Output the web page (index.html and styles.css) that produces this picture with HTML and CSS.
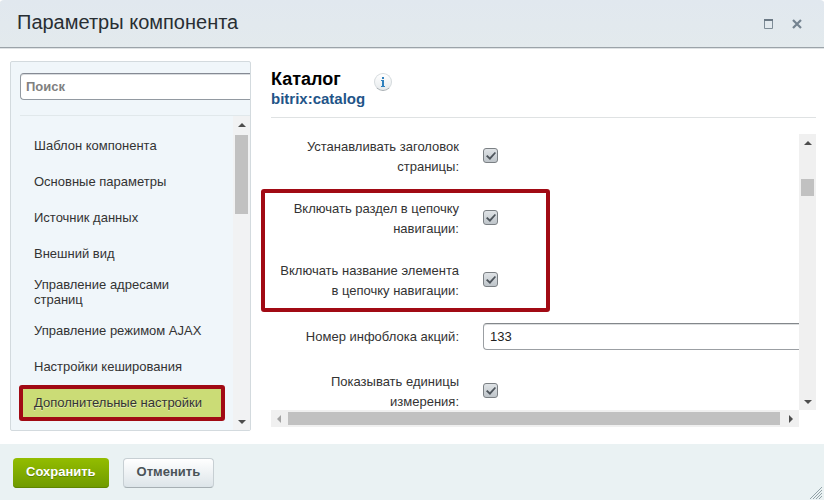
FILE: index.html
```html
<!DOCTYPE html>
<html lang="ru">
<head>
<meta charset="utf-8">
<title>Параметры компонента</title>
<link rel="stylesheet" href="styles.css">
</head>
<body>
<div class="dialog">
  <header class="dialog-head">
    <h1>Параметры компонента</h1>
    <button class="win-btn" type="button" aria-label="Развернуть"><svg width="10" height="10" viewBox="0 0 10 10"><path d="M1 1.500H9M.5 1V9.500H8.500V1" fill="none" stroke="#7e8c97"/><path d="M0 1H9" stroke="#6b7985" stroke-width="2"/></svg></button>
    <button class="win-btn" type="button" aria-label="Закрыть"><svg width="10" height="10" viewBox="0 0 10 10"><path d="M1 1L9 9M9 1L1 9" stroke="#748390" stroke-width="2.200"/></svg></button>
  </header>

  <div class="dialog-body">
    <aside class="side">
      <input class="search" type="text" placeholder="Поиск" aria-label="Поиск">
      <div class="side-scroll">
        <nav class="menu">
          <a href="#">Шаблон компонента</a>
          <a href="#">Основные параметры</a>
          <a href="#">Источник данных</a>
          <a href="#">Внешний вид</a>
          <a class="two-line" href="#">Управление адресами страниц</a>
          <a href="#">Управление режимом AJAX</a>
          <a href="#">Настройки кеширования</a>
          <a class="current" href="#">Дополнительные настройки</a>
        </nav>
        <div class="vbar side-bar">
          <svg width="8" height="4" viewBox="0 0 8 4"><path d="M0 4L4 0L8 4Z"/></svg>
          <span class="thumb side-thumb"></span>
          <svg class="end" width="8" height="4" viewBox="0 0 8 4"><path d="M0 0L4 4L8 0Z"/></svg>
        </div>
      </div>
    </aside>

    <main class="content">
      <div class="content-head">
        <div>
          <h2>Каталог</h2>
          <a class="code" href="#">bitrix:catalog</a>
        </div>
        <button class="info" type="button" aria-label="Справка"><svg width="6" height="10" viewBox="0 0 6 10"><path d="M2 0H4V2H2ZM1 3H4V9H5V10H1V9H2V4H1Z" fill="#2f80bd"/></svg></button>
      </div>
      <div class="pane">
        <form class="form">
          <div class="row"><label for="c1">Устанавливать заголовок страницы:</label><input id="c1" type="checkbox" checked></div>
          <div class="marked">
            <div class="row"><label for="c2">Включать раздел в цепочку навигации:</label><input id="c2" type="checkbox" checked></div>
            <div class="row"><label for="c3">Включать название элемента в цепочку навигации:</label><input id="c3" type="checkbox" checked></div>
          </div>
          <div class="row field"><label for="c4">Номер инфоблока акций:</label><input id="c4" type="text" value="133"></div>
          <div class="row"><label for="c5">Показывать единицы измерения:</label><input id="c5" type="checkbox" checked></div>
        </form>
        <div class="vbar">
          <svg width="8" height="4" viewBox="0 0 8 4"><path d="M0 4L4 0L8 4Z"/></svg>
          <span class="thumb form-thumb"></span>
          <svg class="end" width="8" height="4" viewBox="0 0 8 4"><path d="M0 0L4 4L8 0Z"/></svg>
        </div>
        <div class="hbar">
          <svg class="dim" width="4" height="8" viewBox="0 0 4 8"><path d="M4 0L0 4L4 8Z"/></svg>
          <span class="thumb"></span>
          <svg width="4" height="8" viewBox="0 0 4 8"><path d="M0 0L4 4L0 8Z"/></svg>
        </div>
      </div>
    </main>
  </div>

  <footer class="dialog-foot">
    <button class="btn save" type="button">Сохранить</button>
    <button class="btn cancel" type="button">Отменить</button>
    <svg class="grip" width="12" height="12" viewBox="0 0 12 12"><path d="M0 12L12 0M3 12L12 3M6 12L12 6M9 12L12 9" stroke="#93a3a8"/></svg>
  </footer>
</div>
</body>
</html>
```
FILE: styles.css
```css
*, *::before, *::after { box-sizing: border-box; }
body {
  margin: 0;
  background: #fff;
  color: #333;
  font-family: "Liberation Sans", Arial, sans-serif;
  font-size: 13px;
}
h1, h2 { margin: 0; }
a { text-decoration: none; color: inherit; }
svg { display: block; flex: none; }
button { font-family: inherit; cursor: pointer; }

.dialog {
  display: flex;
  flex-direction: column;
  min-height: 100vh;
}
.dialog-head {
  display: flex;
  align-items: center;
  gap: 18px;
  height: 49px;
  padding: 0 22px 0 17px;
  background: linear-gradient(#e1e8ef, #e3eaed);
  border-bottom: 1px solid #dfe3e5;
  box-shadow: inset 0 -1px #9ba3a9;
  border-radius: 4px 4px 0 0;
}
.dialog-head h1 {
  flex: 1;
  padding-bottom: 5px;
  font-size: 20px;
  font-weight: 400;
  line-height: 24px;
  color: #282e33;
}
.win-btn { padding: 0; border: 0; background: none; }

.dialog-body {
  flex: 1;
  display: flex;
  gap: 20px;
  padding: 12px 8px 13px 10px;
}

.side {
  flex: none;
  width: 241px;
  display: flex;
  flex-direction: column;
  padding: 11px 0 0 9px;
  background: #f0f6fa;
  border: 1px solid #d3dade;
  border-radius: 2px;
}
.search {
  height: 27px;
  padding: 0 5px;
  font: bold 13px "Liberation Sans", Arial, sans-serif;
  background: #fff;
  border: 1px solid #9299a1;
  border-top-color: #858a94;
  border-right: 0;
  border-radius: 4px 0 0 4px;
  box-shadow: inset 0 1px #d9dcdf;
}
.search::placeholder { color: #808080; opacity: 1; }
.side-scroll {
  flex: 1;
  display: flex;
  margin-top: 15px;
  border-top: 1px solid #e1e8eb;
}
.menu { flex: 1; padding-top: 12px; }
.menu a {
  display: flex;
  align-items: center;
  height: 36px;
  padding: 0 14px 2px;
  line-height: 15px;
}
.menu .two-line { height: 41px; }
.menu .current {
  margin-left: -1px;
  margin-right: 8px;
  padding: 0 11px 2px;
  background: #cbdc76;
  border: 4px solid #a10a14;
  border-radius: 3px;
  text-shadow: 0 1px #e4eeb2;
}

.vbar {
  display: flex;
  flex-direction: column;
  align-items: center;
  width: 17px;
  padding: 7px 0 6px;
  background: #f0f0f0;
}
.vbar .end { margin-top: auto; }
.vbar path, .hbar path { fill: #4d4d4d; }
.thumb { display: block; background: #c1c1c1; }
.side-bar { background: #f1f2f3; }
.side-thumb { width: 13px; height: 79px; margin-top: 8px; }

.content {
  flex: 1;
  min-width: 0;
  display: flex;
  flex-direction: column;
}
.content-head {
  display: flex;
  align-items: flex-start;
  gap: 9px;
  height: 57px;
  padding-top: 8px;
  border-bottom: 1px solid #dfe2e3;
}
.content-head h2 {
  font-size: 18px;
  line-height: 20px;
  color: #000;
}
.code {
  display: block;
  font-size: 15px;
  font-weight: 700;
  line-height: 20px;
  color: #1f5588;
}
.info {
  display: flex;
  align-items: center;
  justify-content: center;
  width: 18px;
  height: 18px;
  margin-top: 4px;
  padding: 0;
  border: 1px solid #d5dadd;
  border-bottom-color: #a8afb3;
  border-radius: 50%;
  background: linear-gradient(#fff, #e6eaec);
}

.pane {
  flex: 1;
  display: grid;
  grid-template-columns: 1fr 17px;
  grid-template-rows: 1fr 17px;
  margin-bottom: 4px;
}
.pane > .vbar { margin-top: 16px; }
.form { height: 284px; margin-top: 8px; }
.row {
  display: grid;
  grid-template-columns: 188px 1fr;
  column-gap: 24px;
  align-items: center;
  height: 62px;
}
.row label {
  padding-left: 8px;
  text-align: right;
  line-height: 20px;
}
.row.field { height: 49px; }
.marked { position: relative; }
.marked::after {
  content: "";
  position: absolute;
  top: 1px;
  left: -10px;
  width: 289px;
  height: 123px;
  border: 4px solid #a10a14;
  border-radius: 3px;
  pointer-events: none;
}
input[type="checkbox"] {
  appearance: none;
  width: 15px;
  height: 15px;
  margin: 0 0 3px;
  border: 1px solid #7b8084;
  border-radius: 3px;
  background: linear-gradient(#dfe3e6, #bfc5ca);
}
input[type="checkbox"]::before {
  content: "";
  display: block;
  width: 10px;
  height: 8px;
  margin: 3px 2px;
  background: #4e555c;
  clip-path: polygon(0 52%, 14% 36%, 38% 66%, 88% 0, 100% 12%, 40% 100%);
}
.field input {
  width: 100%;
  min-width: 0;
  height: 27px;
  padding: 0 6px;
  font: 13px "Liberation Sans", Arial, sans-serif;
  color: #222;
  background: #fff;
  border: 1px solid #9b9fa3;
  border-top-color: #83878b;
  border-right: 0;
  border-radius: 4px 0 0 4px;
  box-shadow: inset 0 1px #dcdedf;
}
.form-thumb { width: 13px; height: 17px; margin-top: 34px; }
.hbar {
  display: flex;
  align-items: center;
  gap: 9px;
  padding: 0 6px;
  background: #f0f0f0;
}
.hbar .thumb { flex: 1; height: 13px; margin-left: -2px; }
.hbar .dim path { fill: #a3a3a3; }

.dialog-foot {
  display: flex;
  gap: 14px;
  height: 56px;
  padding: 14px 2px 1px 13px;
  background: #eaf2f3;
}
.btn {
  height: 30px;
  padding: 0 13px 3px;
  font-size: 13px;
  font-weight: 700;
  border-radius: 4px;
}
.save {
  color: #fff;
  border: 0;
  background: linear-gradient(#93bd00, #6f9a00);
  box-shadow: inset 0 -1px #5f8500;
  text-shadow: 0 1px #5d8300;
}
.cancel {
  color: #4a5358;
  border: 1px solid #c7cfd3;
  border-bottom-color: #a6afb3;
  background: linear-gradient(#fff, #dde5e9);
}
.grip { margin-left: auto; align-self: flex-end; }
```
